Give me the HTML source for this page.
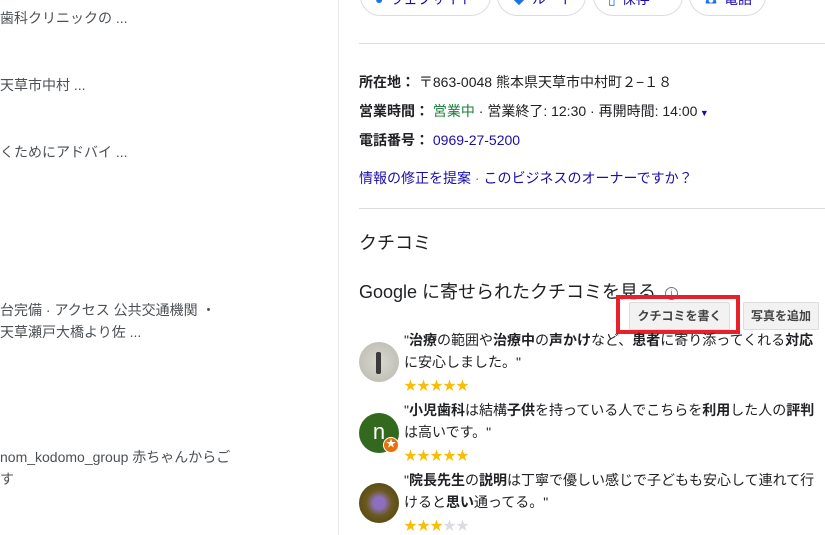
<!DOCTYPE html>
<html><head><meta charset="utf-8"><style>
*{margin:0;padding:0;box-sizing:border-box}
body{width:825px;height:535px;overflow:hidden;background:#fff;font-family:"Liberation Sans","Noto Sans CJK JP",sans-serif;color:#202124;position:relative}
.a{position:absolute;white-space:nowrap}
.l{color:#4d5156;font-size:14px}
.pill{position:absolute;top:-24px;height:40px;border:1px solid #dadce0;border-radius:20px;font-size:14px;color:#1a0dab;padding-top:12px;padding-left:14px;white-space:nowrap}
.pill span{color:#1a73e8;margin-right:6px}
.i{font-size:14px}
.i b{font-weight:bold}
.st{color:#fbbc04;font-size:13px}
.rv{font-size:14px;line-height:22px;width:420px;white-space:normal;color:#202124}
.av{position:absolute;left:359px;width:40px;height:40px;border-radius:50%}
</style></head><body>
<div class="a l" style="left:0;top:8px">歯科クリニックの ...</div>
<div class="a l" style="left:0;top:75px">天草市中村 ...</div>
<div class="a l" style="left:0;top:142px">くためにアドバイ ...</div>
<div class="a l" style="left:0;top:300px">台完備 · アクセス 公共交通機関 ・</div>
<div class="a l" style="left:0;top:322px">天草瀬戸大橋より佐 ...</div>
<div class="a l" style="left:0;top:447px">nom_kodomo_group 赤ちゃんからご</div>
<div class="a l" style="left:0;top:469px">す</div>
<div class="a" style="left:338px;top:0;width:1px;height:535px;background:#ebebeb"></div>
<div class="pill" style="left:360px;width:131px"><span>●</span>ウェブサイト</div>
<div class="pill" style="left:497px;width:89px"><span>◆</span>ルート</div>
<div class="pill" style="left:593px;width:90px"><span>▯</span>保存</div>
<div class="pill" style="left:689px;width:77px"><span>☎</span>電話</div>
<div class="a" style="left:359px;top:43px;width:466px;height:1px;background:#dadce0"></div>
<div class="a i" style="left:359px;top:72px"><b>所在地：</b> 〒863-0048 熊本県天草市中村町２−１８</div>
<div class="a i" style="left:359px;top:101px"><b>営業時間：</b> <span style="color:#188038">営業中</span> · 営業終了: 12:30 · 再開時間: 14:00<span style="color:#1a0dab;font-size:9px"> ▼</span></div>
<div class="a i" style="left:359px;top:130px"><b>電話番号：</b> <span style="color:#1a0dab">0969-27-5200</span></div>
<div class="a i" style="left:359px;top:168px;color:#1a0dab">情報の修正を提案 <span style="color:#70757a">·</span> このビジネスのオーナーですか？</div>
<div class="a" style="left:359px;top:208px;width:466px;height:1px;background:#dadce0"></div>
<div class="a" style="left:359px;top:229px;font-size:18px">クチコミ</div>
<div class="a" style="left:359px;top:278px;font-size:18px">Google に寄せられたクチコミを見る <span style="display:inline-block;width:13px;height:13px;border:1.5px solid #70757a;border-radius:50%;font-size:9px;text-align:center;line-height:10px;color:#70757a;vertical-align:2px;margin-left:4px">i</span></div>
<div class="a" style="left:629px;top:302px;width:101px;height:28px;background:#f2f2f2;border:1px solid #dcdcdc;border-radius:2px;font-size:12px;font-weight:bold;color:#444;text-align:center;line-height:26px">クチコミを書く</div>
<div class="a" style="left:616px;top:295px;width:124px;height:39px;border:4px solid #e8202a"></div>
<div class="a" style="left:743px;top:302px;width:76px;height:28px;background:#f2f2f2;border:1px solid #dcdcdc;border-radius:2px;font-size:12px;font-weight:bold;color:#444;text-align:center;line-height:26px">写真を追加</div>
<div class="av" style="top:342px;background:radial-gradient(circle at 50% 50%,#d8d8d0,#b9b8ae)"><div style="position:absolute;left:17px;top:10px;width:5px;height:22px;background:#3a3a3a;border-radius:2px"></div></div>
<div class="av" style="top:413px;background:#33691e;color:#fff;font-size:22px;text-align:center;line-height:38px">n<div style="position:absolute;left:24px;top:24px;width:16px;height:16px;border-radius:50%;background:#e8710a;border:1.5px solid #fff;font-size:10px;line-height:13px">★</div></div>
<div class="av" style="top:483px;background:radial-gradient(circle,#8e6fbf 20%,#6b5a1e 45%,#4a3d12)"></div>
<div class="a rv" style="left:404px;top:329px">"<b>治療</b>の範囲や<b>治療中</b>の<b>声かけ</b>など、<b>患者</b>に寄り添ってくれる<b>対応</b>に安心しました。"</div>
<div class="a st" style="left:404px;top:375px">★★★★★</div>
<div class="a rv" style="left:404px;top:399px">"<b>小児歯科</b>は結構<b>子供</b>を持っている人でこちらを<b>利用</b>した人の<b>評判</b>は高いです。"</div>
<div class="a st" style="left:404px;top:445px">★★★★★</div>
<div class="a rv" style="left:404px;top:469px">"<b>院長先生</b>の<b>説明</b>は丁寧で優しい感じで子どもも安心して連れて行けると<b>思い</b>通ってる。"</div>
<div class="a st" style="left:404px;top:515px">★★★<span style="color:#dadce0">★★</span></div>
</body></html>
